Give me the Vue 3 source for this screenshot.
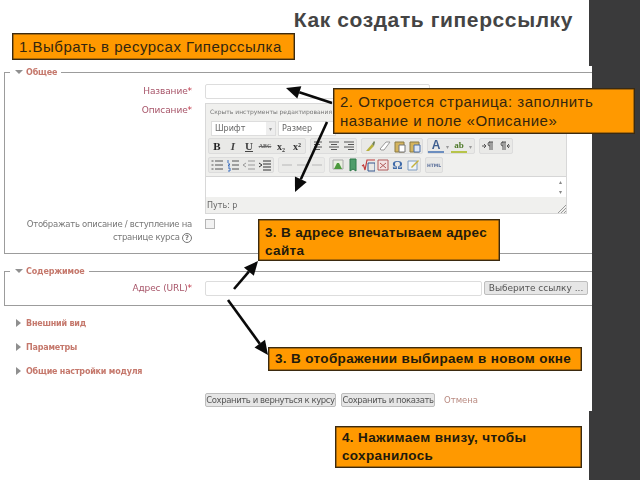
<template>
  <div class="slide">
    <header class="head">
      <h1 class="title">Как создать гиперссылку</h1>
      <div class="note note-first">1.Выбрать в ресурсах Гиперссылка</div>
    </header>

    <main class="shot">
      <fieldset class="group group-general">
        <legend><span class="tri-down"></span>Общее</legend>
        <div class="row">
          <label class="lab">Название<i>*</i></label>
          <div class="field name-field"></div>
        </div>
        <div class="row">
          <label class="lab">Описание<i>*</i></label>
          <div class="editor">
            <div class="ed-hide">Скрыть инструменты редактирования</div>
            <div class="ed-selects">
              <div class="sel sel-font">Шрифт<span class="sel-btn">▾</span></div>
              <div class="sel sel-size">Размер</div>
            </div>
            <div v-for="(bar, b) in bars" :key="b" class="ed-bar">
              <div v-for="(grp, g) in bar" :key="g" class="ed-group" :class="{ faded: grp.faded, narrow: grp.narrow }">
                <span v-for="(ic, i) in grp.items" :key="i" class="ed-icon" :class="ic.cls">
                  <template v-if="ic.text">{{ ic.text }}</template>
                  <svg v-else width="14" height="14" viewBox="0 0 14 14">
                    <path v-for="(p, n) in ic.paths" :key="n" :d="p.d" :stroke="p.s || 'none'" :fill="p.f || 'none'"
                      :stroke-width="p.w || 1" />
                  </svg>
                </span>
              </div>
            </div>
            <div class="ed-area">
              <div class="ed-scroll"><span>▴</span><span>▾</span></div>
            </div>
            <div class="ed-path">Путь: p
              <svg class="ed-grip" width="9" height="9" viewBox="0 0 9 9">
                <path d="M1 9L9 1M4 9L9 4M7 9L9 7" stroke="#999" fill="none" />
              </svg>
            </div>
          </div>
        </div>
        <div class="row">
          <label class="lab lab-plain">Отображать описание / вступление на<br />странице курса <b class="help">?</b></label>
          <div class="check"></div>
        </div>
      </fieldset>

      <fieldset class="group group-content">
        <legend><span class="tri-down"></span>Содержимое</legend>
        <div class="row">
          <label class="lab">Адрес (URL)<i>*</i></label>
          <div class="url-line">
            <div class="field url-field"></div>
            <button class="btn btn-pick">Выберите ссылку ...</button>
          </div>
        </div>
      </fieldset>

      <ul class="closed">
        <li v-for="s in closedSections" :key="s"><span class="tri-right"></span>{{ s }}</li>
      </ul>

      <div class="actions">
        <button class="btn btn-back">Сохранить и вернуться к курсу</button>
        <button class="btn btn-show">Сохранить и показать</button>
        <a class="cancel">Отмена</a>
      </div>
    </main>

    <footer class="foot">
      <div class="note note-bold note-save">4. Нажимаем внизу, чтобы<br />сохранилось</div>
    </footer>

    <div class="note note-page">2. Откроется страница: заполнить<br />название и поле «Описание»</div>
    <div class="note note-bold note-url">3. В адресе впечатываем адрес<br />сайта</div>
    <div class="note note-bold note-window">3. В отображении выбираем в новом окне</div>

    <svg class="arrows" width="640" height="480" viewBox="0 0 640 480">
      <g v-for="(a, i) in arrows" :key="i">
        <path :d="a.line" stroke="#0a0a0a" stroke-width="2.6" fill="none" />
        <path :d="a.head" fill="#0a0a0a" />
      </g>
    </svg>
  </div>
</template>

<script setup>
const closedSections = ['Внешний вид', 'Параметры', 'Общие настройки модуля']

// наконечник и линия стрелки по двум точкам
const makeArrow = (x1, y1, x2, y2) => {
  const len = Math.hypot(x2 - x1, y2 - y1)
  const ux = (x2 - x1) / len
  const uy = (y2 - y1) / len
  const bx = x2 - ux * 14
  const by = y2 - uy * 14
  const head = `M${x2} ${y2}L${bx - uy * 6.5} ${by + ux * 6.5}L${bx + uy * 6.5} ${by - ux * 6.5}Z`
  return { line: `M${x1} ${y1}L${bx} ${by}`, head }
}

const arrows = [
  makeArrow(332, 103, 286, 88),
  makeArrow(327, 122, 295, 192),
  makeArrow(234, 289, 258, 261),
  makeArrow(228, 300, 268, 355),
]

const g = '#555'
const lines = (d, s = g) => ({ paths: [{ d, s }] })
const caret = { text: '▾', cls: 'caret' }

const bars = [
  [
    {
      items: [
        { text: 'B', cls: 'tx-b' },
        { text: 'I', cls: 'tx-i' },
        { text: 'U', cls: 'tx-u' },
        { text: 'ABC', cls: 'tx-s' },
        { text: 'x₂', cls: 'tx-x' },
        { text: 'x²', cls: 'tx-x' },
      ],
    },
    {
      narrow: true,
      items: [
        lines('M2 3h8M2 5.5h6M2 8h8M2 10.5h6'),
        lines('M2 3h10M4 5.5h6M2 8h10M4 10.5h6'),
        lines('M2 3h10M6 5.5h6M2 8h10M6 10.5h6'),
      ],
    },
    {
      narrow: true,
      items: [
        { paths: [{ d: 'M3 12L9 5l2 2-5 5z', f: '#b8b13c' }, { d: 'M9 5l2-3 1 1-1 4z', f: '#6f7f55' }] },
        { paths: [{ d: 'M2 10l6-7h4l-6 8H3z', f: '#fff', s: '#9a9a9a' }] },
        { paths: [{ d: 'M2 3h9v10H2z', f: '#d4b45e', s: '#8a7a45' }, { d: 'M6 6h6v7H6z', f: '#fff', s: '#777' }] },
        { paths: [{ d: 'M2 3h9v10H2z', f: '#d4b45e', s: '#8a7a45' }, { d: 'M6 6h6v7H6z', f: '#dfe8f5', s: '#4a6fa8' }] },
      ],
    },
    {
      items: [
        { text: 'A', cls: 'tx-a' },
        caret,
        { text: 'ab', cls: 'tx-ab' },
        caret,
      ],
    },
    {
      items: [
        { paths: [{ d: 'M1 7h3M3 5l2 2-2 2', s: g }, { d: 'M8 3h4M9 3v8M11 3v8M9 3a2 2 0 000 4', s: g }] },
        { paths: [{ d: 'M5 3h4M6 3v8M8 3v8M6 3a2 2 0 000 4', s: g }, { d: 'M13 7h-3M12 5l-2 2 2 2', s: g }] },
      ],
    },
  ],
  [
    {
      items: [
        lines('M5 3h8M5 7h8M5 11h8M1.5 3h2M1.5 7h2M1.5 11h2'),
        { paths: [{ d: 'M2 2v3M2 6h2l-2 2h2M2 10h2v3H2', s: '#3a6fc0' }, { d: 'M6 3h7M6 7h7M6 11h7', s: g }] },
        { paths: [{ d: 'M6 3h7M6 7h7M6 11h7', s: '#999' }, { d: 'M4 5L1 7l3 2', s: '#999' }] },
        { paths: [{ d: 'M5 3h8M5 6h8M5 9h8M5 12h8', s: '#333' }, { d: 'M1 5l3 2-3 2', s: '#333' }] },
      ],
    },
    {
      faded: true,
      narrow: true,
      items: [
        { paths: [{ d: 'M2 7h10', s: '#c4c4c4', w: 2 }] },
        { paths: [{ d: 'M2 7h10', s: '#c4c4c4', w: 2 }] },
        { paths: [{ d: 'M2 7h10', s: '#c4c4c4', w: 2 }] },
      ],
    },
    {
      narrow: true,
      items: [
        { paths: [{ d: 'M2 2h10v9H2z', f: '#e9efe0', s: '#aaa' }, { d: 'M3 11l3-6h2l3 6z', f: '#4c9a3c' }] },
        { paths: [{ d: 'M4 1h6v12l-3-2-3 2z', f: '#4f9d6a', s: '#2f7a4a' }] },
        { paths: [{ d: 'M1 8l1.5-1 1.5 5L6 2h8', s: '#c23a3a', w: 1.2 }, { d: 'M7 5h7v8H7z', s: '#34578f' }] },
        { paths: [{ d: 'M2 2h10v10H2z', f: '#f3e3e3', s: '#b05b5b' }, { d: 'M4 5l6 5M10 5l-6 5', s: '#b05b5b' }] },
        { text: 'Ω', cls: 'tx-om' },
        { paths: [{ d: 'M2 3h9v9H2z', f: '#eef3f8', s: '#7f9cc0' }, { d: 'M5 9l7-7 1 1-7 7z', f: '#c4b13c' }] },
      ],
    },
    { items: [{ text: 'HTML', cls: 'tx-html' }] },
  ],
]
</script>

<style>
html,
body {
  margin: 0;
  background: #3a3a3b;
}
</style>

<style scoped>
.slide {
  position: relative;
  width: 640px;
  height: 480px;
  overflow: hidden;
  background: #3a3a3b;
  font-family: "Liberation Sans", Arial, sans-serif;
}

.head {
  box-sizing: border-box;
  width: 589px;
  height: 66px;
  padding-top: 6px;
  background: #fff;
}

.title {
  margin: 0 16px 0 0;
  height: 27px;
  font-size: 21px;
  line-height: 27px;
  font-weight: 700;
  letter-spacing: 0.6px;
  text-align: right;
  color: #444;
}

.note {
  box-sizing: border-box;
  background: #ff9900;
  border: 1px solid #3b2a10;
  box-shadow: inset 0 0 0 0.5px #5a3c10;
  color: #33260f;
  font-size: 15px;
  line-height: 19px;
  padding: 3px 6px;
}

.note-bold {
  font-weight: 700;
  font-size: 13.5px;
  line-height: 18px;
  letter-spacing: 0.35px;
  color: #221a0c;
  padding: 4px 6px;
}

.note-first {
  width: 283px;
  height: 27px;
  margin-left: 12px;
  letter-spacing: 0.5px;
}

.note-page {
  position: absolute;
  left: 333px;
  top: 88px;
  width: 302px;
  height: 46px;
  letter-spacing: 0.5px;
}

.note-url {
  position: absolute;
  left: 258px;
  top: 219px;
  width: 242px;
  height: 42px;
}

.note-window {
  position: absolute;
  left: 268px;
  top: 347px;
  width: 314px;
  height: 24px;
  padding-top: 2px;
}

.arrows {
  position: absolute;
  left: 0;
  top: 0;
  pointer-events: none;
}

.shot {
  box-sizing: border-box;
  width: 592px;
  height: 345px;
  background: #fff;
  font-family: "DejaVu Sans", sans-serif;
  font-size: 9px;
  color: #666;
  filter: blur(0.35px);
}

.group {
  margin: 0 0 11px 4px;
  padding: 0;
  border: 1px solid #9c9c9c;
  border-right: none;
  min-width: 0;
}

.group legend {
  margin-left: 5px;
  padding: 0 4px 0 5px;
  height: 12px;
  line-height: 14px;
  font-size: 8px;
  font-weight: 700;
  letter-spacing: -0.15px;
  color: #c5786c;
}

.tri-down {
  display: inline-block;
  width: 0;
  height: 0;
  margin-right: 3px;
  vertical-align: 1px;
  border: 4px solid transparent;
  border-top: 4px solid #909090;
  border-bottom: none;
}

.group-general {
  height: 186px;
}

.group-general .row:first-of-type {
  margin-top: 6px;
}

.group-content {
  height: 39px;
  margin-bottom: 0;
}

.group-content .row {
  margin-top: 4px;
}

.row {
  display: flex;
  margin-bottom: 4px;
}

.lab {
  box-sizing: border-box;
  flex: 0 0 200px;
  padding: 1px 13px 0 0;
  text-align: right;
  font-size: 9px;
  line-height: 13px;
  color: #a8566a;
  letter-spacing: -0.1px;
}

.lab i {
  color: #c23a4a;
  font-style: normal;
}

.lab-plain {
  padding-top: 0;
  font-size: 8.5px;
  letter-spacing: -0.27px;
  color: #777;
}

.help {
  display: inline-block;
  box-sizing: border-box;
  width: 10px;
  height: 10px;
  border: 1px solid #777;
  border-radius: 50%;
  font-size: 7px;
  line-height: 8px;
  text-align: center;
}

.field {
  box-sizing: border-box;
  height: 15px;
  background: #fff;
  border: 1px solid #ddd;
  border-radius: 2px;
}

.name-field {
  width: 225px;
}

.check {
  box-sizing: border-box;
  width: 10px;
  height: 10px;
  margin-top: 1px;
  background: #f2f2f2;
  border: 1px solid #b5b5b5;
}

.editor {
  box-sizing: border-box;
  width: 362px;
  height: 111px;
  background: #f0f0ee;
  border: 1px solid #d8d8d8;
  display: flex;
  flex-direction: column;
}

.ed-hide {
  height: 16px;
  padding-left: 4px;
  font-size: 6px;
  line-height: 15px;
  color: #777;
}

.ed-selects {
  display: flex;
  gap: 2px;
  padding: 1px 0 0 5px;
  height: 18px;
  box-sizing: border-box;
}

.sel {
  box-sizing: border-box;
  height: 15px;
  background: #fff;
  border: 1px solid #ddd;
  font-size: 8px;
  line-height: 13px;
  padding-left: 3px;
  color: #666;
}

.sel-font {
  position: relative;
  width: 65px;
}

.sel-btn {
  position: absolute;
  right: 0;
  top: 0;
  width: 9px;
  height: 13px;
  background: #eee;
  text-align: center;
  font-size: 6px;
  color: #999;
}

.sel-size {
  width: 58px;
}

.ed-bar {
  display: flex;
  gap: 4px;
  padding: 0 0 3px 2px;
  height: 19px;
  box-sizing: border-box;
}

.ed-group {
  display: flex;
  align-items: center;
  background: #e9e9e7;
  border: 1px solid #dcdcdc;
  border-radius: 2px;
}

.ed-group.faded {
  opacity: 0.7;
}

.ed-icon {
  display: flex;
  justify-content: center;
  align-items: center;
  width: 16px;
  height: 14px;
  font-family: "Liberation Serif", serif;
  color: #444;
}

.ed-group.narrow .ed-icon {
  width: 15px;
}

.caret {
  width: 7px;
  font-size: 6px;
  color: #999;
}

.tx-b {
  font-weight: 700;
  font-size: 11px;
  color: #222;
}

.tx-i {
  font-style: italic;
  font-weight: 700;
  font-size: 11px;
}

.tx-u {
  text-decoration: underline;
  font-weight: 700;
  font-size: 11px;
}

.tx-s {
  font-size: 6px;
  font-weight: 700;
  text-decoration: line-through;
  color: #666;
}

.tx-x {
  font-weight: 700;
  font-size: 10px;
  color: #333;
}

.tx-a {
  font-family: "Liberation Sans", sans-serif;
  font-weight: 700;
  font-size: 12px;
  color: #3f5f8f;
  border-bottom: 2px solid #6c8ebf;
  height: 12px;
  line-height: 12px;
}

.tx-ab {
  font-size: 9px;
  font-weight: 700;
  color: #4f7a2a;
  border-bottom: 2px solid #b7c44a;
  height: 11px;
  line-height: 10px;
}

.tx-om {
  font-size: 13px;
  font-weight: 700;
  color: #3f6aa8;
}

.tx-html {
  font-family: "DejaVu Sans", sans-serif;
  font-size: 4.5px;
  font-weight: 700;
  color: #5a6f9a;
}

.ed-area {
  display: flex;
  justify-content: flex-end;
  height: 21px;
  background: #fff;
  border-top: 1px solid #d6d6d6;
  flex: none;
  box-sizing: border-box;
}

.ed-scroll {
  display: flex;
  flex-direction: column;
  width: 9px;
  margin-right: 1px;
  align-items: center;
  font-size: 6px;
  line-height: 10px;
  color: #888;
}

.ed-path {
  position: relative;
  flex: 1;
  padding: 4px 0 0 1px;
  font-size: 8px;
  line-height: 10px;
  color: #666;
}

.ed-grip {
  position: absolute;
  right: 0;
  bottom: 0;
}

.url-line {
  display: flex;
  gap: 2px;
}

.url-field {
  width: 277px;
}

.btn {
  box-sizing: border-box;
  height: 14px;
  padding: 0;
  background: #e6e6e6;
  border: 1px solid #bdbdbd;
  border-radius: 2px;
  font-family: "DejaVu Sans", sans-serif;
  font-size: 8.5px;
  line-height: 12px;
  letter-spacing: -0.42px;
  color: #555;
  white-space: nowrap;
}

.btn-pick {
  width: 104px;
  font-size: 9px;
  letter-spacing: 0;
}

.closed {
  list-style: none;
  margin: 6px 0 0 16px;
  padding: 0;
}

.closed li {
  height: 24px;
  line-height: 24px;
  font-size: 8px;
  font-weight: 700;
  color: #c5786c;
  letter-spacing: -0.2px;
}

.tri-right {
  display: inline-block;
  width: 0;
  height: 0;
  margin-right: 5px;
  vertical-align: -1px;
  border: 4px solid transparent;
  border-left: 5px solid #8f8f8f;
  border-right: none;
}

.actions {
  display: flex;
  align-items: center;
  gap: 5px;
  margin: 9px 0 0 205px;
}

.btn-back {
  width: 131px;
}

.btn-show {
  width: 94px;
}

.cancel {
  margin-left: 4px;
  font-size: 8.5px;
  color: #b98a80;
}

.foot {
  box-sizing: border-box;
  width: 589px;
  height: 69px;
  padding: 15px 0 0 335px;
  background: #fff;
}

.note-save {
  width: 247px;
  height: 42px;
  padding: 2px 6px;
}
</style>
